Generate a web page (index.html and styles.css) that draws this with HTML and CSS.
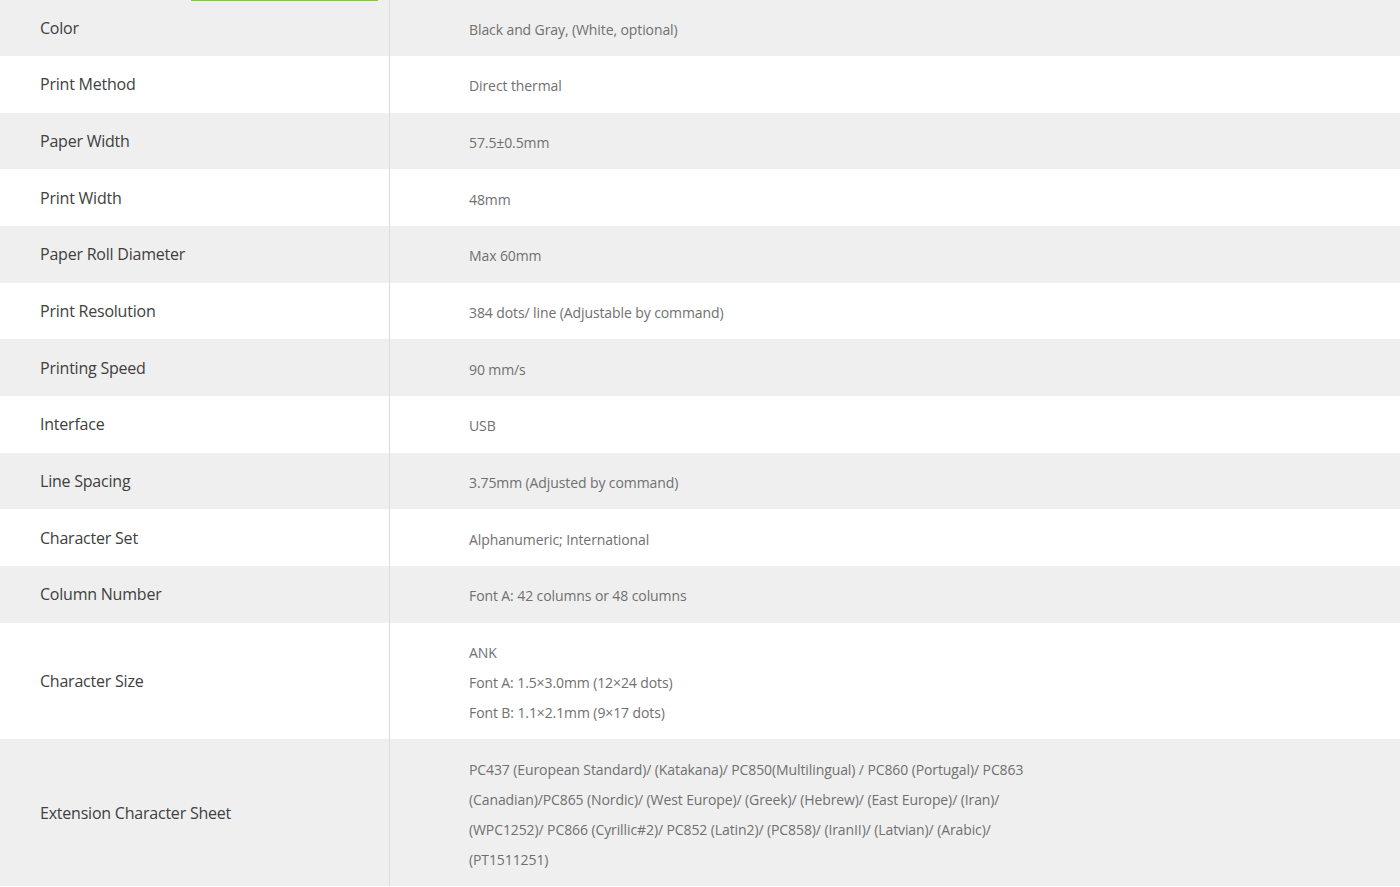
FILE: index.html
```html
<!DOCTYPE html>
<html lang="en">
<head>
<meta charset="utf-8">
<title>Specifications</title>
<link rel="stylesheet" href="styles.css">
</head>
<body>
<div class="page">
  <div class="tab-indicator"></div>
  <div class="spec-table">
    <div class="row"><div class="label">Color</div><div class="value">Black and Gray, (White, optional)</div></div>
    <div class="row"><div class="label">Print Method</div><div class="value">Direct thermal</div></div>
    <div class="row"><div class="label">Paper Width</div><div class="value">57.5±0.5mm</div></div>
    <div class="row"><div class="label">Print Width</div><div class="value">48mm</div></div>
    <div class="row"><div class="label">Paper Roll Diameter</div><div class="value">Max 60mm</div></div>
    <div class="row"><div class="label">Print Resolution</div><div class="value">384 dots/ line (Adjustable by command)</div></div>
    <div class="row"><div class="label">Printing Speed</div><div class="value">90 mm/s</div></div>
    <div class="row"><div class="label">Interface</div><div class="value">USB</div></div>
    <div class="row"><div class="label">Line Spacing</div><div class="value">3.75mm (Adjusted by command)</div></div>
    <div class="row"><div class="label">Character Set</div><div class="value">Alphanumeric; International</div></div>
    <div class="row"><div class="label">Column Number</div><div class="value">Font A: 42 columns or 48 columns</div></div>
    <div class="row"><div class="label">Character Size</div><div class="value">ANK<br>Font A: 1.5×3.0mm (12×24 dots)<br>Font B: 1.1×2.1mm (9×17 dots)</div></div>
    <div class="row"><div class="label">Extension Character Sheet</div><div class="value value-wrap">PC437 (European Standard)/ (Katakana)/ PC850(Multilingual) / PC860 (Portugal)/ PC863 (Canadian)/PC865 (Nordic)/ (West Europe)/ (Greek)/ (Hebrew)/ (East Europe)/ (Iran)/ (WPC1252)/ PC866 (Cyrillic#2)/ PC852 (Latin2)/ (PC858)/ (IranII)/ (Latvian)/ (Arabic)/ (PT1511251)</div></div>
  </div>
</div>
</body>
</html>
```

FILE: styles.css
```css
html, body {
  margin: 0;
  padding: 0;
  background: #ffffff;
}
body {
  font-family: "Open Sans", "Noto Sans", sans-serif;
  overflow: hidden;
}
.page {
  position: relative;
  width: 1400px;
}
.tab-indicator {
  position: absolute;
  top: 0;
  left: 191px;
  width: 187px;
  height: 2px;
  background: #86c24f;
  z-index: 2;
}
.spec-table {
  display: flex;
  flex-direction: column;
  margin-top: -0.67px;
}
.row {
  display: flex;
  background: #ffffff;
}
.row:nth-child(odd) {
  background: #efefef;
}
.label {
  width: 390px;
  flex: none;
  box-sizing: border-box;
  padding: 13.33px 0 13.33px 40px;
  border-right: 1px solid #dcdcdc;
  display: flex;
  align-items: center;
  font-size: 16px;
  letter-spacing: -0.22px;
  color: #404040;
  line-height: 30px;
}
.value {
  flex: 1;
  padding: 15.33px 0 11.33px 79px;
  font-size: 14px;
  letter-spacing: -0.1px;
  line-height: 30px;
  color: #707070;
}
.value-wrap {
  max-width: 585px;
}
```
